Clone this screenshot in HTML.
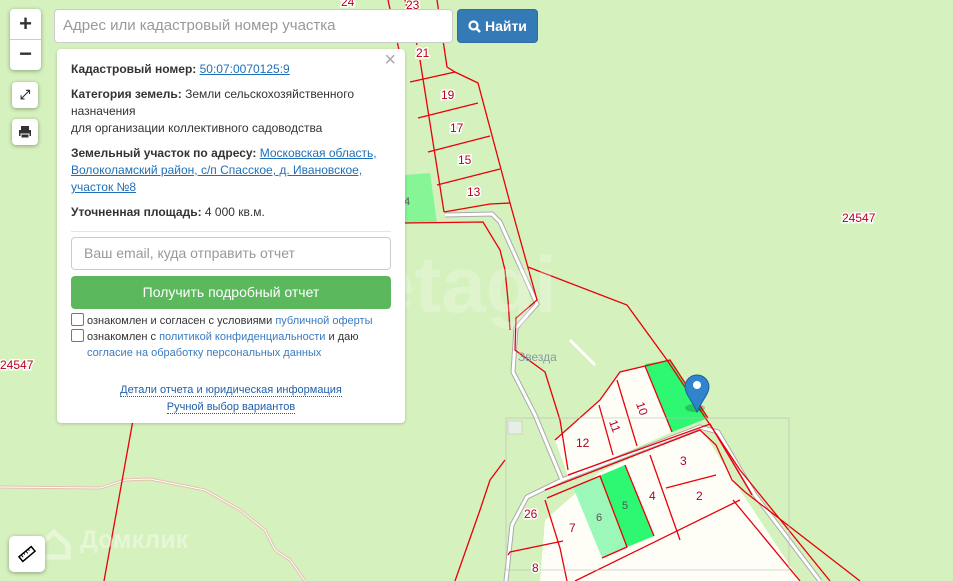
<!DOCTYPE html>
<html><head><meta charset="utf-8"><style>
body{margin:0;width:953px;height:581px;overflow:hidden;background:#d5f1bd;font-family:"Liberation Sans",sans-serif;position:relative}
svg.map{position:absolute;left:0;top:0}
.ctl{position:absolute;background:#fff;border-radius:4px;box-shadow:0 1px 4px rgba(0,0,0,.35);display:flex;align-items:center;justify-content:center;color:#333}
#search{position:absolute;left:54px;top:9px;width:399px;height:34px;box-sizing:border-box;border:1px solid #ccc;border-radius:4px;background:#fff;font-size:15px;color:#999;padding:8px 8px;line-height:16px}
#btn{position:absolute;left:457px;top:9px;width:81px;height:34px;box-sizing:border-box;background:#337ab7;border:1px solid #2e6da4;border-radius:4px;color:#fff;font-size:14px;font-weight:bold;line-height:32px;text-align:center}
#panel{position:absolute;left:57px;top:49px;width:348px;height:374px;background:#fff;border-radius:4px;box-shadow:0 1px 3px rgba(0,0,0,.2);font-size:12px;color:#333;line-height:17px}
#panel a{color:#1f6fb9;text-decoration:underline}
.p{position:absolute;left:14px}
.lk{color:#3a7bc0}
.dl{color:#1f5fa8;border-bottom:1px dotted #1f5fa8}
.cb{display:inline-block;width:11px;height:11px;border:1px solid #777;border-radius:2px;vertical-align:-2px;margin-right:3px}
.num{font-size:12px;fill:#b8001a;stroke:#fff;stroke-width:3px;paint-order:stroke;font-family:"Liberation Sans",sans-serif}
</style></head><body>
<svg class="map" width="953" height="581" viewBox="0 0 953 581">
<polygon points="555,440 600,400 620,372 645,366 672,432 580,472 568,476" fill="#fffef6"/>
<polygon points="540,581 545,520 600,472 700,427 740,490 800,581" fill="#fffef6"/>
<polygon points="573,487 599,476 627,547 602,558" fill="#9cf8b8"/>
<polygon points="599,476 625,465 654,536 627,547" fill="#2ef871"/>
<polygon points="645,364 670,360 708,418 672,432" fill="#2ef871"/>
<polygon points="405,175 430,173 437,223 405,223" fill="#85f596"/>
<g fill="none" stroke="#aaa" stroke-width="5"><polyline points="445,215 492,214 500,222 537,304 516,328 513,372 535,415 562,480 527,497 512,525 506,581"/><polyline points="562,480 700,427 718,432 755,495 820,581"/></g>
<g fill="none" stroke="#fff" stroke-width="3"><polyline points="445,215 492,214 500,222 537,304 516,328 513,372 535,415 562,480 527,497 512,525 506,581"/><polyline points="562,480 700,427 718,432 755,495 820,581"/></g>
<polyline points="570,340 595,365" stroke="#fff" stroke-width="3" fill="none"/>
<polyline points="0,487 100,488 125,480 150,479 205,490 240,510 265,530 275,550 290,560 305,581" fill="none" stroke="#e5c0b0" stroke-width="3"/>
<polyline points="0,487 100,488 125,480 150,479 205,490 240,510 265,530 275,550 290,560 305,581" fill="none" stroke="#fff" stroke-width="1"/>
<g fill="none" stroke="#e8000b" stroke-width="1.3">
<polyline points="437,0 447,67 455,72 478,83 510,203 537,300 516,318 515,350 545,372 560,420 568,470"/>
<polyline points="528,267 627,305 667,360 740,470 830,581"/>
<polyline points="405,0 417,45"/><polyline points="388,0 399,50"/>
<polyline points="410,82 455,72"/><polyline points="418,118 478,103"/><polyline points="428,152 490,136"/><polyline points="437,185 500,169"/><polyline points="444,212 490,204 510,203"/>
<polyline points="420,60 444,212"/>
<polyline points="405,223 483,222 500,250 505,270 508,300 510,330"/>
<polyline points="133,420 104,581"/>
<polyline points="555,440 600,400 620,372 645,366 670,360 708,418"/>
<polyline points="568,475 710,424 752,495"/>
<polyline points="599,405 613,455"/><polyline points="617,380 637,446"/><polyline points="645,366 672,432"/>
<polyline points="545,490 700,430 716,445 732,480 745,492 860,581"/>
<polyline points="547,498 600,476 627,547 602,558"/><polyline points="625,465 654,536"/><polyline points="650,455 680,540"/><polyline points="666,488 716,475"/>
<polyline points="545,500 560,548 567,581"/><polyline points="563,541 510,552 508,555"/>
<polyline points="575,581 740,500"/>
<polyline points="733,500 800,581"/>
<polyline points="505,460 490,480 480,510 455,581"/>
</g>
<rect x="506" y="418" width="283" height="152" fill="none" stroke="#bbb" stroke-width="0.6"/>
<text class="num" x="341" y="6">24</text><text class="num" x="406" y="9">23</text><text class="num" x="416" y="57">21</text>
<text class="num" x="441" y="99">19</text><text class="num" x="450" y="132">17</text><text class="num" x="458" y="164">15</text><text class="num" x="467" y="196">13</text>
<text class="num" x="842" y="222">24547</text><text class="num" x="0" y="369">24547</text>
<text class="num" x="576" y="447">12</text><text class="num" x="680" y="465">3</text><text class="num" x="696" y="500">2</text><text class="num" x="649" y="500">4</text>
<text class="num" x="524" y="518">26</text><text class="num" x="569" y="532">7</text><text class="num" x="532" y="572">8</text>
<text class="num" x="610" y="428" transform="rotate(70 614 424)">11</text><text class="num" x="637" y="410" transform="rotate(70 641 406)">10</text>
<text x="596" y="521" font-size="11" fill="#555">6</text><text x="622" y="509" font-size="11" fill="#555">5</text><text x="404" y="205" font-size="11" fill="#555">4</text>
<text x="518" y="361" font-size="12" fill="#8a9aa5">Звезда</text>
<text x="370" y="312" font-size="80" font-weight="bold" fill="#fff" fill-opacity="0.25">etagi</text>
<text x="80" y="548" font-size="25" font-weight="bold" fill="#fff" fill-opacity="0.4">Домклик</text>
<path d="M40,545 l14,-13 l14,13 v12 h-28z" fill="none" stroke="#fff" stroke-opacity="0.4" stroke-width="5"/>
<rect x="508" y="421" width="14" height="13" fill="#e6eee6" stroke="#bbb" stroke-width="0.5"/>
<ellipse cx="695" cy="408" rx="10" ry="4" fill="#000" fill-opacity="0.2"/>
<path d="M685,387 a12,12 0 0 1 24,0 c0,7 -7,13 -12,25 c-5,-12 -12,-18 -12,-25z" fill="#2f84cd" stroke="#1f5f99" stroke-width="1"/>
<circle cx="697" cy="385" r="4" fill="#fff"/>
</svg>
<div class="ctl" style="left:10px;top:9px;width:31px;height:61px;flex-direction:column"><div style="font-size:22px;font-weight:bold;height:30px;line-height:30px;border-bottom:1px solid #ccc;width:100%;text-align:center">+</div><div style="font-size:22px;font-weight:bold;height:30px;line-height:28px">−</div></div>
<div class="ctl" style="left:12px;top:82px;width:26px;height:26px;font-size:13px;font-weight:bold">⤢</div>
<div class="ctl" style="left:12px;top:119px;width:26px;height:26px"><svg width="14" height="14"><rect x="3" y="1" width="8" height="4" fill="#333"/><rect x="1" y="5" width="12" height="6" fill="#333"/><rect x="3" y="9" width="8" height="4" fill="#333" stroke="#fff" stroke-width="1"/></svg></div>
<div class="ctl" style="left:9px;top:536px;width:36px;height:36px;border-radius:5px"><svg width="20" height="20"><g transform="rotate(-40 10 10)"><rect x="2" y="7" width="16" height="6" fill="none" stroke="#000" stroke-width="1.5"/><path d="M5,7v3M8,7v2M11,7v3M14,7v2" stroke="#000"/></g></svg></div>
<div id="search">Адрес или кадастровый номер участка</div>
<div id="btn"><svg width="13" height="13" style="vertical-align:-2px"><circle cx="5.5" cy="5.5" r="4" fill="none" stroke="#fff" stroke-width="2.2"/><path d="M8.5,8.5 12,12" stroke="#fff" stroke-width="2.5"/></svg> Найти</div>
<div id="panel">
<div style="position:absolute;right:9px;top:3px;font-size:20px;color:#aaa">×</div>
<div class="p" style="top:12px"><b>Кадастровый номер:</b> <a>50:07:0070125:9</a></div>
<div class="p" style="top:37px;width:320px"><b>Категория земель:</b> Земли сельскохозяйственного назначения<br>для организации коллективного садоводства</div>
<div class="p" style="top:96px;width:320px"><b>Земельный участок по адресу:</b> <a>Московская область, Волоколамский район, с/п Спасское, д. Ивановское, участок №8</a></div>
<div class="p" style="top:155px"><b>Уточненная площадь:</b> 4 000 кв.м.</div>
<div style="position:absolute;left:14px;top:182px;width:320px;border-top:1px solid #e5e5e5"></div>
<div style="position:absolute;left:14px;top:188px;width:320px;height:33px;box-sizing:border-box;border:1px solid #ccc;border-radius:4px;font-size:14px;color:#999;padding:7px 12px">Ваш email, куда отправить отчет</div>
<div style="position:absolute;left:14px;top:227px;width:320px;height:33px;background:#5cb85c;border-radius:4px;color:#fff;font-size:14px;line-height:33px;text-align:center">Получить подробный отчет</div>
<div class="p" style="top:264px;font-size:11px;line-height:16px;width:330px"><span class="cb"></span>ознакомлен и согласен с условиями <span class="lk">публичной оферты</span><br><span class="cb"></span>ознакомлен с <span class="lk">политикой конфиденциальности</span> и даю<br><span style="margin-left:16px" class="lk">согласие на обработку персональных данных</span></div>
<div style="position:absolute;left:0;width:348px;top:333px;text-align:center;font-size:11px;line-height:17px"><span class="dl">Детали отчета и юридическая информация</span><br><span class="dl">Ручной выбор вариантов</span></div>
</div>
</body></html>
